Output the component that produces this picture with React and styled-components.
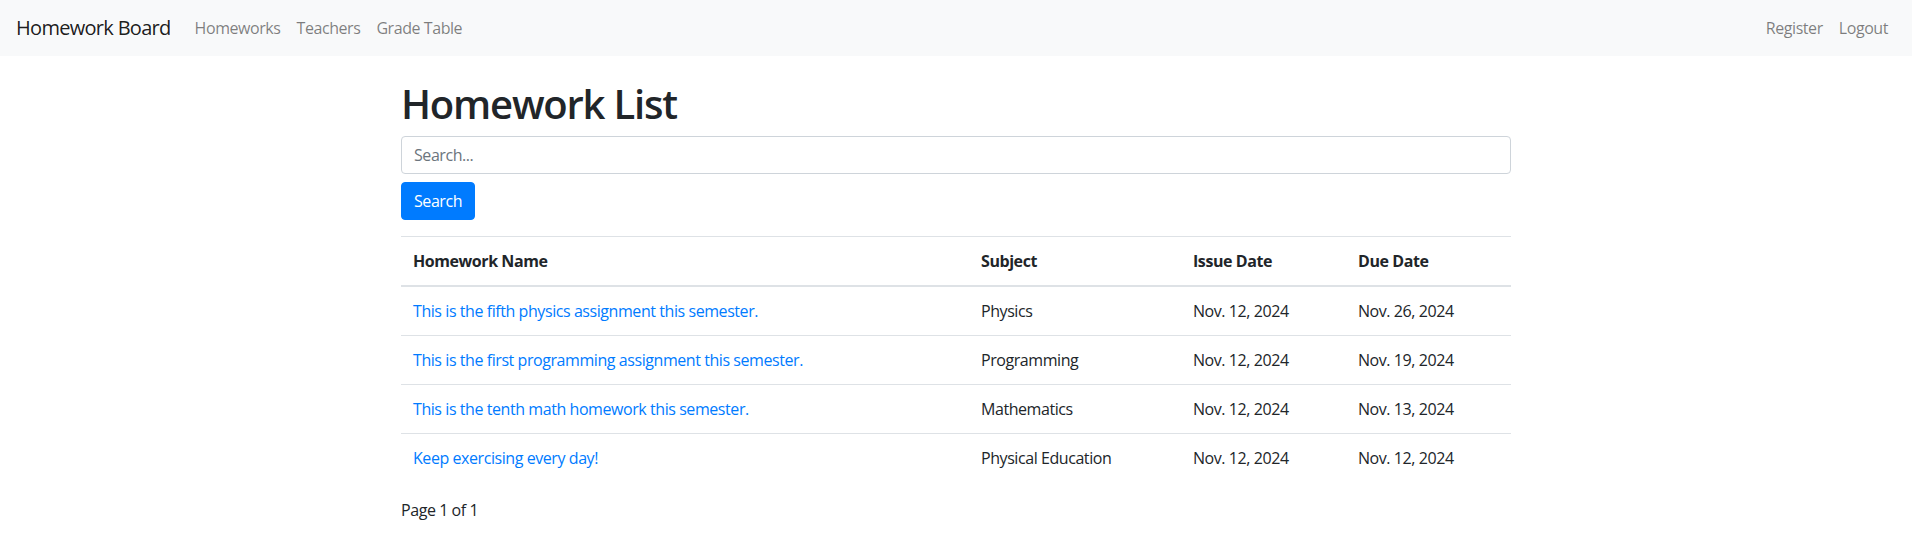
import React from "react";
import styled, { createGlobalStyle } from "styled-components";

const Global = createGlobalStyle`
  *, *::before, *::after { box-sizing: border-box; }
  html, body { margin: 0; padding: 0; }
  body {
    font-family: "Segoe UI", "Open Sans", "Noto Sans", sans-serif;
    font-size: 16px;
    line-height: 1.5;
    letter-spacing: -0.027em;
    color: #212529;
    background: #fff;
  }
`;

const Navbar = styled.nav`
  display: flex;
  align-items: center;
  justify-content: space-between;
  height: 56px;
  padding: 8px 16px;
  background: #f8f9fa;
`;

const NavGroup = styled.div`
  display: flex;
  align-items: center;
`;

const Brand = styled.a`
  font-size: 20px;
  line-height: 30px;
  padding: 5px 0;
  margin-right: 16px;
  letter-spacing: -0.035em;
  color: rgba(0, 0, 0, 0.9);
  text-decoration: none;
`;

const NavLink = styled.a`
  padding: 8px;
  color: rgba(0, 0, 0, 0.5);
  text-decoration: none;
  line-height: 24px;
`;

const Container = styled.main`
  width: 1140px;
  margin: 24px auto 0;
  padding: 0 15px;
`;

const Title = styled.h1`
  margin: 0 0 8px;
  font-size: 40px;
  font-weight: 600;
  letter-spacing: -0.03em;
  line-height: 1.2;
`;

const SearchForm = styled.form`
  display: flex;
  flex-direction: column;
  align-items: flex-start;
  gap: 8px;
  margin-bottom: 16px;
`;

const Input = styled.input`
  width: 100%;
  height: 38px;
  padding: 6px 12px;
  font: inherit;
  letter-spacing: inherit;
  color: #495057;
  border: 1px solid #ced4da;
  border-radius: 4px;
  &::placeholder { color: #6c757d; }
`;

const Button = styled.button`
  height: 38px;
  padding: 6px 12px;
  font: inherit;
  letter-spacing: inherit;
  color: #fff;
  background: #007bff;
  border: 1px solid #007bff;
  border-radius: 4px;
`;

const Table = styled.table`
  width: 100%;
  border-collapse: collapse;
  margin-bottom: 16px;
`;

const Th = styled.th`
  width: ${(p) => p.$w}px;
  text-align: left;
  padding: 12px;
  font-weight: 700;
  vertical-align: bottom;
  border-top: 1px solid #dee2e6;
  border-bottom: 2px solid #dee2e6;
`;

const Td = styled.td`
  padding: 12px;
  border-top: 1px solid #dee2e6;
  vertical-align: top;
`;

const Link = styled.a`
  color: #007bff;
  text-decoration: none;
`;

const Footer = styled.p`
  margin: 0;
`;

const rows = [
  ["This is the fifth physics assignment this semester.", "Physics", "Nov. 12, 2024", "Nov. 26, 2024"],
  ["This is the first programming assignment this semester.", "Programming", "Nov. 12, 2024", "Nov. 19, 2024"],
  ["This is the tenth math homework this semester.", "Mathematics", "Nov. 12, 2024", "Nov. 13, 2024"],
  ["Keep exercising every day!", "Physical Education", "Nov. 12, 2024", "Nov. 12, 2024"],
];

export default function App() {
  return (
    <>
      <Global />
      <Navbar>
        <NavGroup>
          <Brand href="#">Homework Board</Brand>
          <NavLink href="#">Homeworks</NavLink>
          <NavLink href="#">Teachers</NavLink>
          <NavLink href="#">Grade Table</NavLink>
        </NavGroup>
        <NavGroup>
          <NavLink href="#">Register</NavLink>
          <NavLink href="#">Logout</NavLink>
        </NavGroup>
      </Navbar>
      <Container>
        <Title>Homework List</Title>
        <SearchForm onSubmit={(e) => e.preventDefault()}>
          <Input placeholder="Search..." />
          <Button type="submit">Search</Button>
        </SearchForm>
        <Table>
          <thead>
            <tr>
              <Th $w={568}>Homework Name</Th>
              <Th $w={212}>Subject</Th>
              <Th $w={165}>Issue Date</Th>
              <Th $w={165}>Due Date</Th>
            </tr>
          </thead>
          <tbody>
            {rows.map((r) => (
              <tr key={r[0]}>
                <Td><Link href="#">{r[0]}</Link></Td>
                <Td>{r[1]}</Td>
                <Td>{r[2]}</Td>
                <Td>{r[3]}</Td>
              </tr>
            ))}
          </tbody>
        </Table>
        <Footer>Page 1 of 1</Footer>
      </Container>
    </>
  );
}
